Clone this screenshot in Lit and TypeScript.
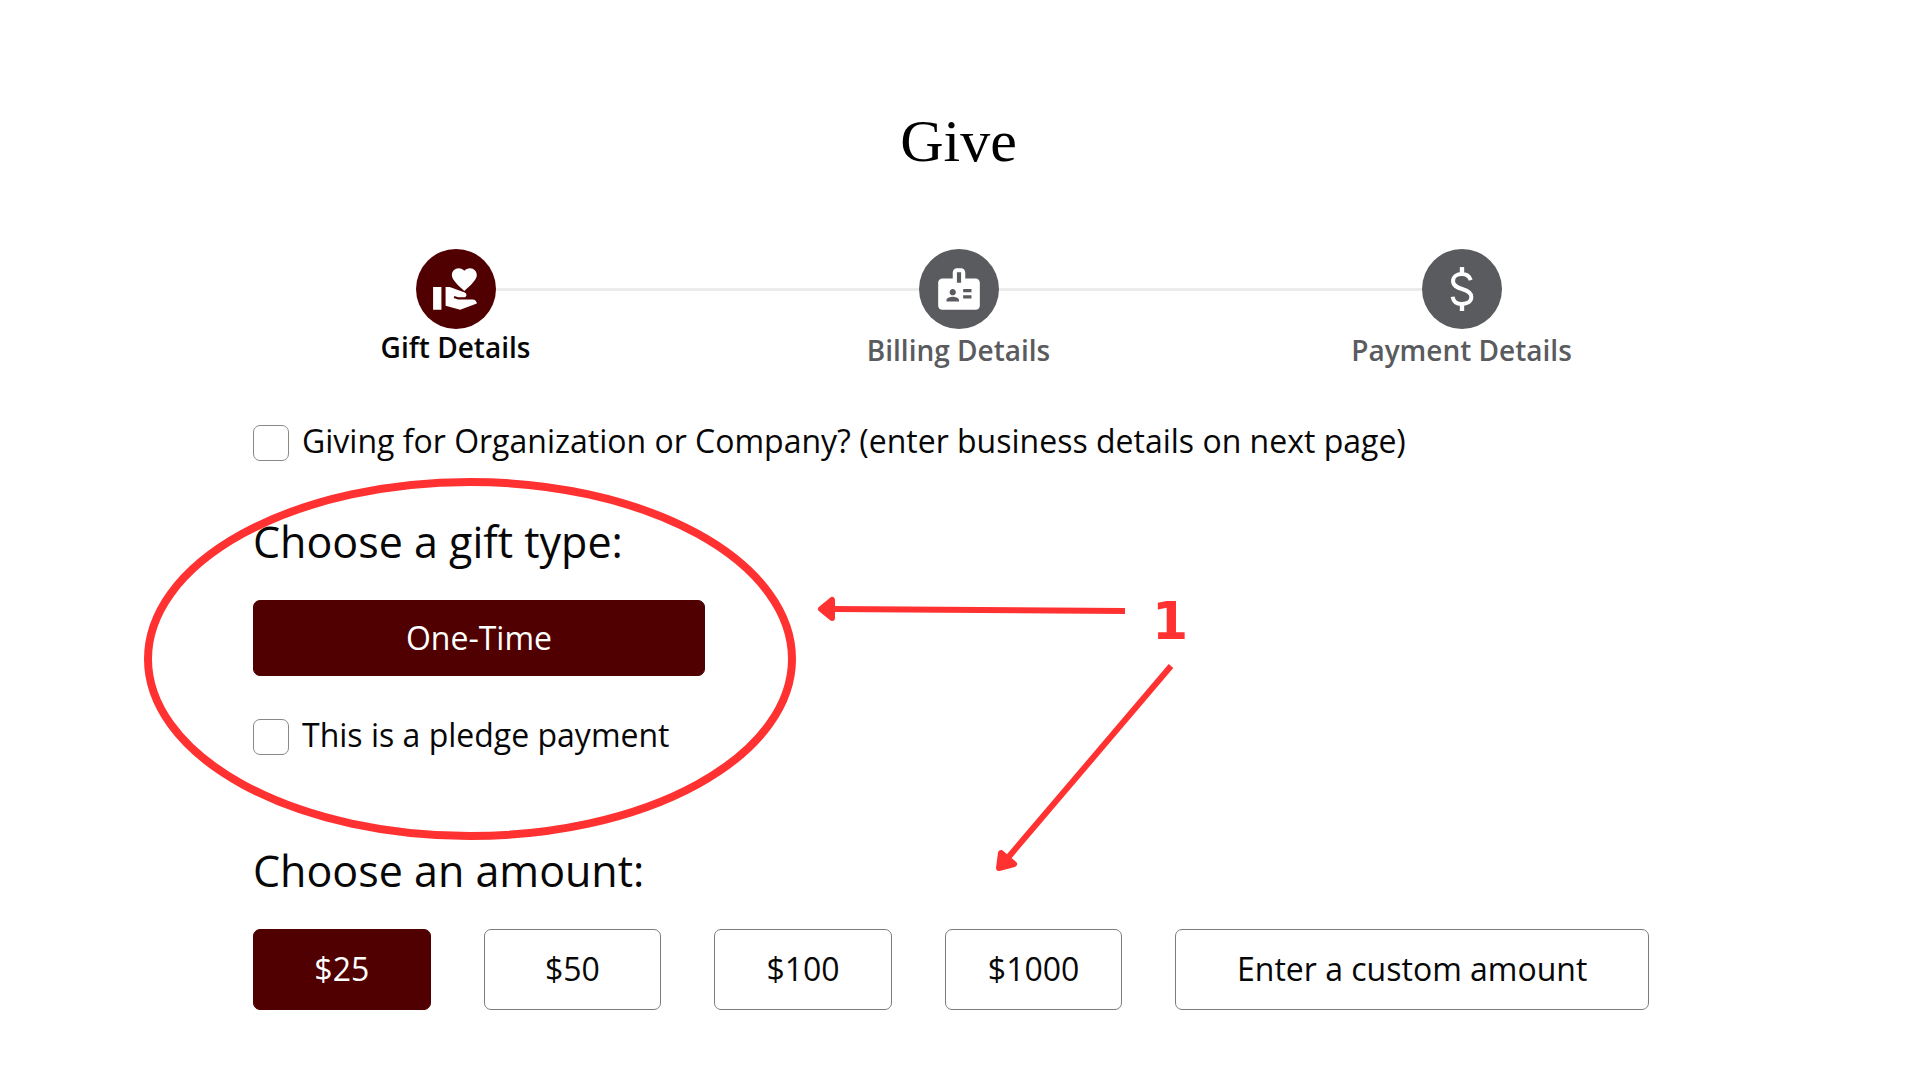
import { LitElement, html, css, svg } from "lit";
import { customElement, state } from "lit/decorators.js";
import { classMap } from "lit/directives/class-map.js";

const giftIcon = svg`<path d="M1 11h4v11H1zm15-7.75C16.65 2.49 17.66 2 18.7 2 20.55 2 22 3.45 22 5.3c0 2.27-2.91 4.9-6 7.7-3.09-2.81-6-5.44-6-7.7C10 3.45 11.45 2 13.3 2c1.04 0 2.05.49 2.7 1.25zM20 17h-7l-2.09-.73.33-.94L13 16h2.82c.65 0 1.18-.53 1.18-1.18 0-.49-.31-.93-.77-1.11L8.97 11H7v9.02L14 22l8.01-3c-.01-1.1-.9-2-2.01-2z"/>`;

const badgeIcon = svg`<path d="M20 7h-5V4c0-1.1-.9-2-2-2h-2c-1.1 0-2 .9-2 2v3H4c-1.1 0-2 .9-2 2v11c0 1.1.9 2 2 2h16c1.1 0 2-.9 2-2V9c0-1.1-.9-2-2-2zM9 12c.83 0 1.5.67 1.5 1.5S9.83 15 9 15s-1.5-.67-1.5-1.5S8.17 12 9 12zm3 6H6v-.75c0-1 2-1.5 3-1.5s3 .5 3 1.5V18zm1-9h-2V4h2v5zm5 7.5h-4V15h4v1.5zm0-3h-4V12h4v1.5z"/>`;

const dollarIcon = svg`<path fill="none" stroke="currentColor" stroke-width="1.9" d="M12 1.5V4.8M12 19.2V22.5M16.2 7.7C15.5 5.7 14 4.8 12 4.8C9.6 4.8 7.7 6.1 7.7 8.2C7.7 10.4 9.4 11.200 12 12C14.800 12.800 16.500 13.700 16.500 15.900C16.500 18 14.600 19.200 12 19.200C9.500 19.200 7.800 18 7.500 15.700"/><path fill="none" stroke="currentColor" stroke-width="2.100" d="M12 1.500V4.800M12 19.200V22.500"/>`;

const STEPS = [
  { label: "Gift Details", icon: giftIcon },
  { label: "Billing Details", icon: badgeIcon },
  { label: "Payment Details", icon: dollarIcon },
];

const AMOUNTS = ["$25", "$50", "$100", "$1000", "Enter a custom amount"];

@customElement("app-root")
export class AppRoot extends LitElement {
  @state() private step = 0;
  @state() private amount = 0;

  static styles = css`
    :host {
      display: block;
      position: relative;
      min-height: 100vh;
      box-sizing: border-box;
      padding: 111px 207px 60px 204px;
      background: #fff;
      color: #080707;
      font-family: "Open Sans", "Noto Sans", sans-serif;
      font-size: 32px;
    }
    h1,
    h2,
    ol {
      margin: 0;
      padding: 0;
      font-weight: 400;
    }
    h1 {
      color: #000;
      font-family: "Liberation Serif", serif;
      font-size: 60px;
      line-height: 60px;
      text-align: center;
    }
    .steps {
      display: grid;
      grid-template-columns: repeat(3, 1fr);
      margin-top: 78px;
      list-style: none;
    }
    .step {
      display: grid;
      grid-template-columns: 1fr 80px 1fr;
      grid-template-rows: 80px 42px;
      align-items: center;
      color: #5a5b5e;
    }
    .rail {
      height: 3px;
      background: #ebebeb;
    }
    .step:first-child .rail:first-child,
    .step:last-child .rail:last-of-type {
      visibility: hidden;
    }
    .disc {
      display: flex;
      align-items: center;
      justify-content: center;
      height: 80px;
      border-radius: 50%;
      background: #5a5b5e;
      color: #fff;
    }
    .disc svg {
      width: 50px;
      height: 50px;
      fill: currentColor;
    }
    .label {
      grid-column: 1 / -1;
      font-size: 28px;
      font-weight: 600;
      line-height: 42px;
      text-align: center;
    }
    .step.current .disc {
      background: #500000;
    }
    .step.current .label {
      align-self: start;
      color: #080707;
      line-height: 36px;
    }
    form {
      padding: 54px 64px 0 49px;
    }
    h2 {
      margin-bottom: 27px;
      font-size: 43px;
      line-height: 62px;
    }
    .check {
      display: flex;
      gap: 13px;
      width: fit-content;
      line-height: 32px;
    }
    .check input {
      appearance: none;
      flex: none;
      width: 36px;
      height: 36px;
      margin: 0;
      border: 1px solid #8c8884;
      border-radius: 7px;
      background: #fff;
    }
    .check input:checked {
      background: #500000;
    }
    .type {
      margin-top: 50px;
    }
    .type .check {
      margin-top: 43px;
    }
    .amount {
      margin-top: 85px;
    }
    button {
      box-sizing: border-box;
      padding: 0 0 2px;
      border: 1px solid #7c7c7c;
      border-radius: 7px;
      background: #fff;
      color: inherit;
      font: inherit;
    }
    button.chosen {
      border-color: #500000;
      background: #500000;
      color: #fff;
    }
    .one-time {
      display: block;
      width: 452px;
      height: 76px;
    }
    .amounts {
      display: grid;
      grid-template-columns: repeat(4, 3fr) 8fr;
      gap: 53px;
    }
    .amounts button {
      height: 81px;
    }
    .notes {
      position: absolute;
      top: 0;
      left: 0;
      width: 1200px;
      height: 900px;
      color: #ff3131;
      pointer-events: none;
    }
    .notes text {
      fill: currentColor;
      font-family: "DejaVu Sans", sans-serif;
      font-size: 52px;
      font-weight: 700;
    }
    .stroke {
      fill: none;
      stroke: currentColor;
      stroke-width: 6px;
    }
    .ring {
      stroke-width: 8px;
    }
    .head {
      fill: currentColor;
      stroke: currentColor;
      stroke-width: 6px;
      stroke-linejoin: round;
    }
  `;

  render() {
    return html`
      <h1>Give</h1>
      <ol class="steps">
        ${STEPS.map(
          (s, i) => html`
            <li class=${classMap({ step: true, current: i === this.step })}>
              <span class="rail"></span>
              <div class="disc"><svg viewBox="0 0 24 24" aria-hidden="true">${s.icon}</svg></div>
              <span class="rail"></span>
              <div class="label">${s.label}</div>
            </li>
          `,
        )}
      </ol>
      <form @submit=${(e: Event) => e.preventDefault()}>
        <label class="check" for="org">
          <input type="checkbox" id="org" />
          Giving for Organization or Company? (enter business details on next page)
        </label>
        <section class="type">
          <h2>Choose a gift type:</h2>
          <button type="button" class="one-time chosen">One-Time</button>
          <label class="check" for="pledge">
            <input type="checkbox" id="pledge" />
            This is a pledge payment
          </label>
        </section>
        <section class="amount">
          <h2>Choose an amount:</h2>
          <div class="amounts">
            ${AMOUNTS.map(
              (a, i) => html`
                <button
                  type="button"
                  class=${classMap({ chosen: i === this.amount })}
                  @click=${() => (this.amount = i)}
                >${a}</button>
              `,
            )}
          </div>
        </section>
      </form>
      <svg class="notes" viewBox="0 0 1200 900">
        <ellipse class="stroke ring" cx="470" cy="659" rx="322" ry="177" />
        <path class="stroke" d="M1125 611L832 609" />
        <path class="head" d="M821 609L832 600V618Z" />
        <path class="stroke" d="M1171 666L1006 860" />
        <path class="head" d="M999 868L1001 853L1014 864Z" />
        <text x="1152" y="639">1</text>
      </svg>
    `;
  }
}
